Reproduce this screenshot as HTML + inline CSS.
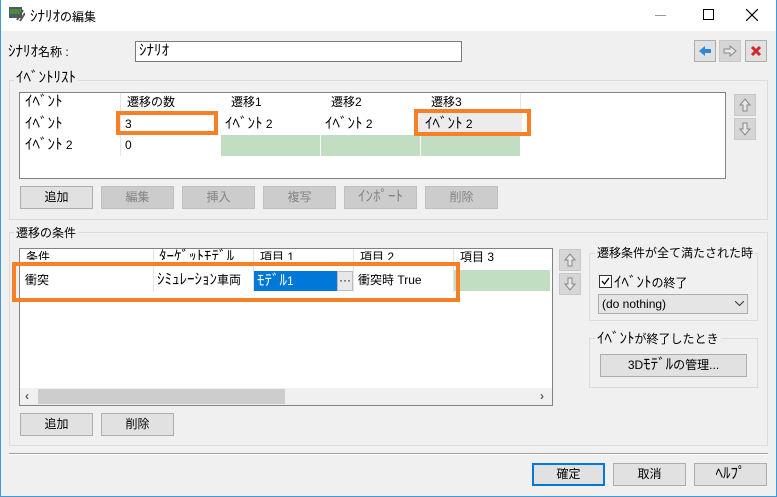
<!DOCTYPE html>
<html><head><meta charset="utf-8"><style>
*{box-sizing:border-box;margin:0;padding:0}
body{width:777px;height:497px;overflow:hidden;background:#f0f0f0;font-family:"Liberation Sans","Noto Sans CJK JP",sans-serif;font-size:12px;color:#000;position:relative}
.h{font-size:15px;line-height:1}
.a{position:absolute}
.win{position:absolute;left:0;top:0;width:777px;height:497px;border:1px solid #3c9ae0;border-top:none}
.title{position:absolute;left:0;top:0;width:777px;height:31px;background:#fff}
.btn{position:absolute;height:23px;border:1px solid #adadad;background:#e1e1e1;text-align:center;line-height:21px;font-size:12px}
.dis{background:#cccccc;border-color:#bfbfbf;color:#838383}
.grp{position:absolute;border:1px solid #dcdcdc}
.gt{position:absolute;background:#f0f0f0;padding:0 2px;font-size:12px;line-height:14px}
.cell{position:absolute;height:21px;line-height:21px;padding-left:4px;white-space:nowrap;overflow:hidden}
.vl{position:absolute;width:1px;background:#e4e4e4}
.org{position:absolute;border:4px solid #f58025}
.sq{position:absolute;width:22px;height:22px;border:1px solid #c8c8c8;background:#d6d6d6}
</style></head><body>
<div class="title"></div>
<div class="win"></div>
<svg class="a" style="left:9px;top:6px" width="16" height="16"><rect x="0" y="1" width="13" height="11" fill="#4a5b6a"/><rect x="1" y="3" width="11" height="5" fill="#4f8a3b"/><path d="M8 14 L14 4 M11 15 L16 7" stroke="#555" stroke-width="2"/></svg>
<div class="a" style="left:30px;top:8px;font-size:12px"><span class="h">ｼﾅﾘｵ</span>の編集</div>
<div class="a" style="left:655px;top:15px;width:11px;height:1px;background:#999"></div>
<div class="a" style="left:703px;top:9px;width:11px;height:11px;border:1px solid #000"></div>
<svg class="a" style="left:746px;top:9px" width="12" height="12"><path d="M0 0L12 12M12 0L0 12" stroke="#000" stroke-width="1.2"/></svg>

<div class="a" style="left:8px;top:43px"><span class="h">ｼﾅﾘｵ</span>名称 :</div>
<div class="a" style="left:135px;top:41px;width:327px;height:21px;background:#fff;border:1px solid #7a7a7a;padding-left:3px;line-height:19px"><span class="h">ｼﾅﾘｵ</span></div>
<div class="sq" style="left:694px;top:40px;background:#e1e1e1;border-color:#adadad"><svg width="20" height="20"><path d="M4 10L10 5V8H16V12H10V15Z" fill="#2a8ad8"/></svg></div>
<div class="sq" style="left:719px;top:40px"><svg width="20" height="20"><path d="M16 10L10 5V8H4V12H10V15Z" fill="#e8e8e8" stroke="#888"/></svg></div>
<div class="sq" style="left:745px;top:40px;background:#e1e1e1;border-color:#adadad"><svg width="20" height="20"><path d="M6 6L14 14M14 6L6 14" stroke="#d02828" stroke-width="3"/></svg></div>

<div class="grp" style="left:9px;top:80px;width:759px;height:140px"></div>
<div class="gt" style="left:14px;top:70px"><span class="h">ｲﾍﾞﾝﾄﾘｽﾄ</span></div>
<div class="a" style="left:19px;top:92px;width:707px;height:87px;background:#fff;border:1px solid #828282"></div>
<div class="a" style="left:221px;top:135px;width:299px;height:21px;background:#c1dec2"></div>
<div class="vl" style="left:120px;top:93px;height:63px"></div>
<div class="vl" style="left:220px;top:93px;height:63px;background:#fff"></div>
<div class="vl" style="left:320px;top:93px;height:63px;background:#fff"></div>
<div class="vl" style="left:420px;top:93px;height:63px;background:#fff"></div>
<div class="vl" style="left:520px;top:93px;height:21px"></div>
<div class="cell" style="left:21px;top:92px"><span class="h">ｲﾍﾞﾝﾄ</span></div>
<div class="cell" style="left:123px;top:92px">遷移の数</div>
<div class="cell" style="left:227px;top:92px">遷移1</div>
<div class="cell" style="left:327px;top:92px">遷移2</div>
<div class="cell" style="left:427px;top:92px">遷移3</div>
<div class="cell" style="left:21px;top:114px"><span class="h">ｲﾍﾞﾝﾄ</span></div>
<div class="cell" style="left:121px;top:114px">3</div>
<div class="cell" style="left:221px;top:114px"><span class="h">ｲﾍﾞﾝﾄ</span> 2</div>
<div class="cell" style="left:321px;top:114px"><span class="h">ｲﾍﾞﾝﾄ</span> 2</div>
<div class="a" style="left:418px;top:113px;width:104px;height:21px;background:#ececec"></div>
<div class="cell" style="left:421px;top:114px"><span class="h">ｲﾍﾞﾝﾄ</span> 2</div>
<div class="cell" style="left:21px;top:135px"><span class="h">ｲﾍﾞﾝﾄ</span> 2</div>
<div class="cell" style="left:121px;top:135px">0</div>
<div class="org" style="left:116px;top:111px;width:102px;height:24px"></div>
<div class="org" style="left:414px;top:109px;width:117px;height:27px"></div>
<div class="sq" style="left:734px;top:94px"><svg width="20" height="20"><path d="M10 4L15 10H12V16H8V10H5Z" fill="#e8e8e8" stroke="#888"/></svg></div>
<div class="sq" style="left:734px;top:118px"><svg width="20" height="20"><path d="M10 16L15 10H12V4H8V10H5Z" fill="#e8e8e8" stroke="#888"/></svg></div>
<div class="btn" style="left:20px;top:186px;width:73px">追加</div>
<div class="btn dis" style="left:101px;top:186px;width:73px">編集</div>
<div class="btn dis" style="left:182px;top:186px;width:73px">挿入</div>
<div class="btn dis" style="left:263px;top:186px;width:73px">複写</div>
<div class="btn dis" style="left:344px;top:186px;width:73px"><span class="h">ｲﾝﾎﾟｰﾄ</span></div>
<div class="btn dis" style="left:425px;top:186px;width:73px">削除</div>

<div class="grp" style="left:9px;top:232px;width:759px;height:214px"></div>
<div class="gt" style="left:14px;top:226px">遷移の条件</div>
<div class="a" style="left:19px;top:248px;width:534px;height:158px;background:#fff;border:1px solid #828282"></div>
<div class="a" style="left:454px;top:270px;width:96px;height:21px;background:#c1dec2"></div>
<div class="vl" style="left:153px;top:249px;height:43px"></div>
<div class="vl" style="left:253px;top:249px;height:43px"></div>
<div class="vl" style="left:353px;top:249px;height:43px"></div>
<div class="vl" style="left:453px;top:249px;height:43px"></div>
<div class="cell" style="left:22px;top:247px;height:13px;line-height:20px">条件</div>
<div class="cell" style="left:155px;top:247px;height:13px;line-height:20px"><span class="h">ﾀｰｹﾞｯﾄﾓﾃﾞﾙ</span></div>
<div class="cell" style="left:256px;top:247px;height:13px;line-height:20px">項目 1</div>
<div class="cell" style="left:356px;top:247px;height:13px;line-height:20px">項目 2</div>
<div class="cell" style="left:456px;top:247px;height:20px;line-height:20px">項目 3</div>
<div class="cell" style="left:21px;top:270px">衝突</div>
<div class="cell" style="left:153px;top:270px"><span class="h">ｼﾐｭﾚｰｼｮﾝ</span>車両</div>
<div class="a" style="left:254px;top:271px;width:83px;height:20px;background:#0078d7;color:#fff;padding-left:3px;line-height:20px"><span class="h">ﾓﾃﾞﾙ</span>1</div>
<div class="a" style="left:337px;top:271px;width:16px;height:20px;background:#e8e8e8;border:1px solid #bbb;text-align:center;line-height:16px">···</div>
<div class="cell" style="left:354px;top:270px">衝突時 True</div>
<div class="org" style="left:12px;top:262px;width:448px;height:40px"></div>
<div class="a" style="left:20px;top:388px;width:532px;height:17px;background:#f0f0f0"></div>
<div class="a" style="left:38px;top:389px;width:247px;height:15px;background:#cdcdcd"></div>
<div class="a" style="left:25px;top:389px;font-size:12px;color:#555;font-weight:bold">‹</div>
<div class="a" style="left:540px;top:389px;font-size:12px;color:#555;font-weight:bold">›</div>
<div class="sq" style="left:559px;top:249px"><svg width="20" height="20"><path d="M10 4L15 10H12V16H8V10H5Z" fill="#e8e8e8" stroke="#888"/></svg></div>
<div class="sq" style="left:559px;top:273px"><svg width="20" height="20"><path d="M10 16L15 10H12V4H8V10H5Z" fill="#e8e8e8" stroke="#888"/></svg></div>

<div class="grp" style="left:589px;top:253px;width:169px;height:68px"></div>
<div class="gt" style="left:595px;top:246px">遷移条件が全て満たされた時</div>
<div class="a" style="left:599px;top:275px;width:13px;height:13px;border:1px solid #333;background:#fff"><svg width="11" height="11"><path d="M2 5L4.5 8L9 2" stroke="#000" fill="none" stroke-width="1.3"/></svg></div>
<div class="a" style="left:614px;top:274px"><span class="h">ｲﾍﾞﾝﾄ</span>の終了</div>
<div class="a" style="left:598px;top:294px;width:150px;height:20px;border:1px solid #adadad;background:#e5e5e5;padding-left:3px;line-height:18px">(do nothing)<svg class="a" style="left:136px;top:6px" width="9" height="6"><path d="M0 0L4.5 4.5L9 0" stroke="#333" fill="none"/></svg></div>
<div class="grp" style="left:589px;top:338px;width:169px;height:50px"></div>
<div class="gt" style="left:595px;top:331px"><span class="h">ｲﾍﾞﾝﾄ</span>が終了したとき</div>
<div class="btn" style="left:600px;top:354px;width:147px">3D<span class="h">ﾓﾃﾞﾙ</span>の管理...</div>
<div class="btn" style="left:20px;top:413px;width:73px">追加</div>
<div class="btn" style="left:101px;top:413px;width:73px">削除</div>

<div class="a" style="left:9px;top:453px;width:759px;height:1px;background:#a0a0a0"></div>
<div class="a" style="left:9px;top:454px;width:759px;height:1px;background:#fff"></div>
<div class="btn" style="left:532px;top:463px;width:73px;border:2px solid #0078d7;line-height:19px">確定</div>
<div class="btn" style="left:613px;top:463px;width:73px">取消</div>
<div class="btn" style="left:694px;top:463px;width:73px"><span class="h">ﾍﾙﾌﾟ</span></div>
</body></html>
